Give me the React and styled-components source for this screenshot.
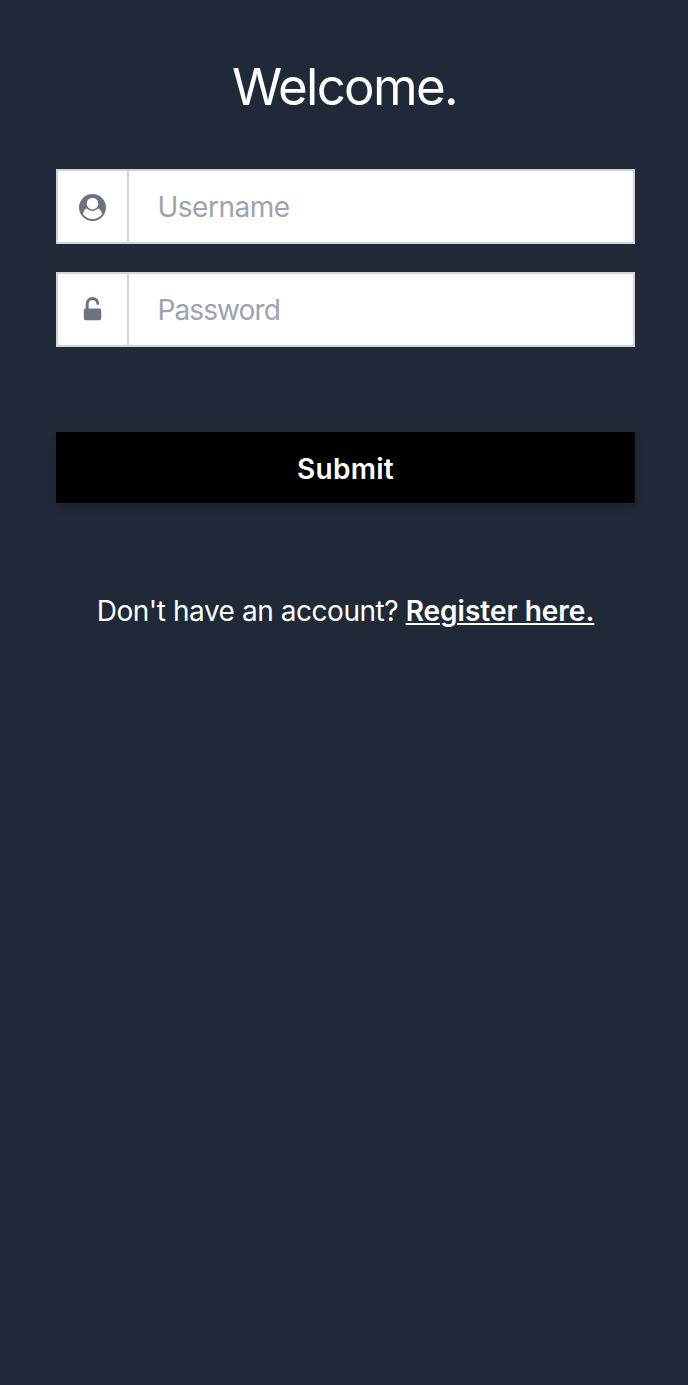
import React from "react";
import styled, { createGlobalStyle } from "styled-components";

const GlobalStyle = createGlobalStyle`
  *, *::before, *::after { box-sizing: border-box; }
  body { margin: 0; background: #1f2937; }
`;

const Page = styled.main`
  min-height: 1385px;
  padding: 57px 53px 0 56px;
  background: #1f2937;
  color: #fff;
  font-family: Inter, "Liberation Sans", sans-serif;
  font-size: 28px;
`;

const Title = styled.h1`
  margin: 0;
  font-size: 51px;
  font-weight: 400;
  line-height: 60px;
  letter-spacing: -1.7px;
  text-indent: -2px;
  text-align: center;
`;

const Form = styled.form`
  display: flex;
  flex-direction: column;
  margin-top: 52px;
`;

const Field = styled.label`
  display: flex;
  height: 75px;
  margin-bottom: 28px;
  background: #fff;
  border: 2px solid #d1d5db;
`;

const IconCell = styled.span`
  display: flex;
  align-items: center;
  justify-content: center;
  width: 71px;
  padding-top: 2px;
  border-right: 2px solid #d1d5db;
  color: #6b7280;
`;

const Input = styled.input`
  flex: 1;
  min-width: 0;
  padding: 1px 28px 0 28.5px;
  border: 0;
  outline: 0;
  background: transparent;
  color: #374151;
  font: inherit;
  letter-spacing: ${(p) => p.$tracking};
  &::placeholder { color: #9ca3af; opacity: 1; }
`;

const SubmitButton = styled.button`
  height: 71px;
  margin-top: 57px;
  padding: 2px 0 0;
  border: 0;
  background: #000;
  color: #fff;
  font: inherit;
  font-weight: 600;
  letter-spacing: 0.3px;
  box-shadow: 0 7px 11px -2px rgba(0, 0, 0, 0.1), 0 4px 7px -2px rgba(0, 0, 0, 0.06);
`;

const Footer = styled.p`
  margin: 87px 0 0;
  line-height: 43px;
  text-align: center;
  white-space: nowrap;
  letter-spacing: -0.45px;
`;

const RegisterLink = styled.a`
  color: inherit;
  font-weight: 600;
  letter-spacing: 0;
  text-decoration: underline;
  text-decoration-thickness: 2px;
  text-underline-offset: 2px;
`;

const UserIcon = () => (
  <svg width="27" height="27" fill="currentColor" viewBox="0 0 1792 1792">
    <path d="M1523 1339q-22-155-87.5-257.5t-184.5-118.5q-67 74-159.5 115.5t-195.5 41.5-195.5-41.5-159.5-115.5q-119 16-184.5 118.5t-87.5 257.5q106 150 271 237.5t356 87.5 356-87.5 271-237.5zm-243-699q0-159-112.5-271.5t-271.5-112.5-271.5 112.5-112.5 271.5 112.5 271.5 271.5 112.5 271.5-112.5 112.5-271.5zm512 256q0 182-71 347.5t-190.5 286-285.5 191.5-349 71q-182 0-348-71t-286-191-191-286-71-348 71-348 191-286 286-191 348-71 348 71 286 191 191 286 71 348z" />
  </svg>
);

const LockIcon = () => (
  <svg width="27" height="27" fill="currentColor" viewBox="0 0 1792 1792">
    <path d="M1376 768q40 0 68 28t28 68v576q0 40-28 68t-68 28h-960q-40 0-68-28t-28-68v-576q0-40 28-68t68-28h32v-320q0-185 131.5-316.5t316.5-131.5 316.5 131.5 131.5 316.5q0 26-19 45t-45 19h-64q-26 0-45-19t-19-45q0-106-75-181t-181-75-181 75-75 181v320h736z" />
  </svg>
);

export default function App() {
  return (
    <Page>
      <GlobalStyle />
      <Title>Welcome.</Title>
      <Form onSubmit={(e) => e.preventDefault()}>
        <Field>
          <IconCell><UserIcon /></IconCell>
          <Input type="text" placeholder="Username" $tracking="-0.5px" />
        </Field>
        <Field>
          <IconCell><LockIcon /></IconCell>
          <Input type="password" placeholder="Password" $tracking="-0.9px" />
        </Field>
        <SubmitButton type="submit">Submit</SubmitButton>
      </Form>
      <Footer>
        Don't have an account? <RegisterLink href="#register">Register here.</RegisterLink>
      </Footer>
    </Page>
  );
}
